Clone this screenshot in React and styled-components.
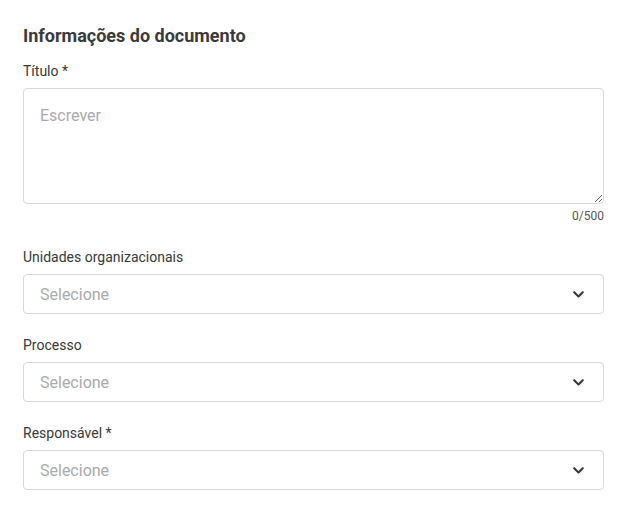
import React from "react";
import styled, { createGlobalStyle } from "styled-components";

const GlobalStyle = createGlobalStyle`
  html, body { margin: 0; padding: 0; background: #ffffff; }
  body { font-family: Roboto, "Noto Sans", Arial, sans-serif; color: #333333; }
  * { box-sizing: border-box; }
`;

const Page = styled.div`
  width: 629px;
  padding: 24px 25px 0 23px;
`;

const Heading = styled.h2`
  margin: 0 0 13px;
  font-size: 18px;
  line-height: 24px;
  font-weight: 700;
  color: #3a3a3a;
`;

const Field = styled.div`
  display: flex;
  flex-direction: column;
  margin-bottom: ${(p) => p.$gap || 21}px;
`;

const Label = styled.label`
  font-size: 14px;
  line-height: 20px;
  color: #383838;
  margin-bottom: 7px;
`;

const TextArea = styled.textarea`
  width: 100%;
  height: 116px;
  border: 1px solid #d9d9d9;
  border-radius: 4px;
  padding: 17px 16px;
  font-family: inherit;
  font-size: 16px;
  color: #333;
  resize: vertical;
  outline: none;
  &::placeholder { color: #aaaaaa; }
`;

const Counter = styled.div`
  align-self: flex-end;
  margin-top: 5px;
  font-size: 12px;
  line-height: 14px;
  color: #555555;
`;

const SelectBox = styled.div`
  display: flex;
  align-items: center;
  justify-content: space-between;
  height: 40px;
  border: 1px solid #d9d9d9;
  border-radius: 4px;
  padding: 0 19px 0 16px;
  font-size: 16px;
  color: #aaaaaa;
  cursor: pointer;
`;

const Chevron = () => (
  <svg width="11" height="7" viewBox="0 0 11 7" fill="none">
    <path d="M1.2 1.2 5.5 5.5l4.3-4.3" stroke="#333" strokeWidth="2" strokeLinecap="round" strokeLinejoin="round" />
  </svg>
);

const Select = ({ placeholder }) => (
  <SelectBox>
    <span>{placeholder}</span>
    <Chevron />
  </SelectBox>
);

export default function App() {
  return (
    <>
      <GlobalStyle />
      <Page>
        <Heading>Informações do documento</Heading>
        <Field $gap={24}>
          <Label>Título *</Label>
          <TextArea placeholder="Escrever" />
          <Counter>0/500</Counter>
        </Field>
        <Field>
          <Label>Unidades organizacionais</Label>
          <Select placeholder="Selecione" />
        </Field>
        <Field>
          <Label>Processo</Label>
          <Select placeholder="Selecione" />
        </Field>
        <Field>
          <Label>Responsável *</Label>
          <Select placeholder="Selecione" />
        </Field>
      </Page>
    </>
  );
}
